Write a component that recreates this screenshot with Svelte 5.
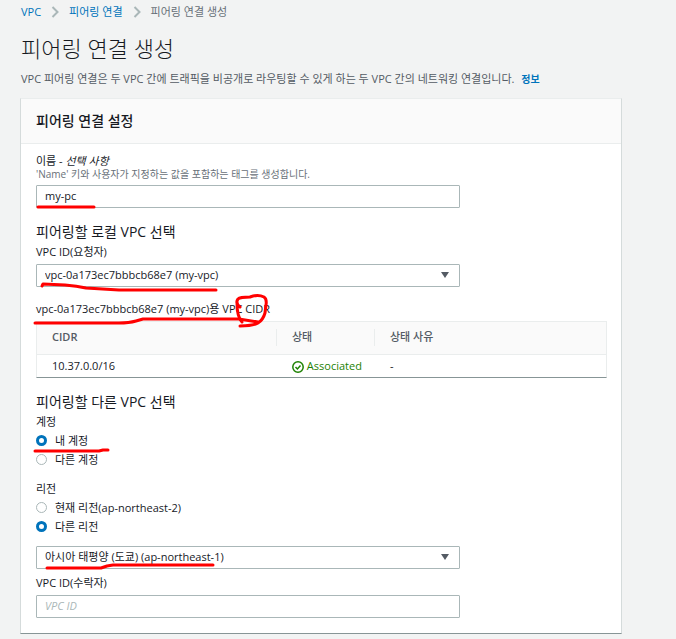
<script>
    let name = $state("my-pc");
    let requester = $state("vpc-0a173ec7bbbcb68e7 (my-vpc)");
    let account = $state("mine");
    let region = $state("other");
    let targetRegion = $state("ap-northeast-1");
    let accepter = $state("");

    const cidrs = [{ cidr: "10.37.0.0/16", status: "Associated", reason: "-" }];
</script>

{#snippet chevron()}
    <svg class="chevron" viewBox="0 0 8 12" aria-hidden="true">
        <path d="M1.5 1 L6.5 6 L1.5 11" />
    </svg>
{/snippet}

<div class="page">
    <nav class="breadcrumb">
        <a href="#vpc">VPC</a>
        {@render chevron()}
        <a href="#peering">피어링 연결</a>
        {@render chevron()}
        <span>피어링 연결 생성</span>
    </nav>

    <h1>피어링 연결 생성</h1>
    <p class="description">
        VPC 피어링 연결은 두 VPC 간에 트래픽을 비공개로 라우팅할 수 있게 하는 두 VPC 간의 네트워킹 연결입니다.
        <a class="info" href="#info">정보</a>
    </p>

    <section class="panel">
        <header>
            <h2>피어링 연결 설정</h2>
        </header>

        <div class="body">
            <div class="field">
                <label for="name">이름 - <em>선택 사항</em></label>
                <div class="hint">'Name' 키와 사용자가 지정하는 값을 포함하는 태그를 생성합니다.</div>
                <input id="name" class="control" type="text" bind:value={name} />
            </div>

            <div class="group">
                <h3>피어링할 로컬 VPC 선택</h3>
                <div class="field">
                    <label for="requester">VPC ID(요청자)</label>
                    <div class="select">
                        <select id="requester" class="control" bind:value={requester}>
                            <option>vpc-0a173ec7bbbcb68e7 (my-vpc)</option>
                        </select>
                        <span class="caret"></span>
                    </div>
                </div>
            </div>

            <table>
                <caption>{requester}용 VPC CIDR</caption>
                <thead>
                    <tr>
                        <th class="col-cidr"><span>CIDR</span></th>
                        <th class="col-status"><span>상태</span></th>
                        <th><span>상태 사유</span></th>
                    </tr>
                </thead>
                <tbody>
                    {#each cidrs as row}
                        <tr>
                            <td>{row.cidr}</td>
                            <td class="status">
                                <svg viewBox="0 0 12 12" aria-hidden="true">
                                    <circle cx="6" cy="6" r="5.2" />
                                    <path d="M3.5 6 L5.4 8 L8.5 4.5" />
                                </svg>
                                {row.status}
                            </td>
                            <td>{row.reason}</td>
                        </tr>
                    {/each}
                </tbody>
            </table>

            <div class="group">
                <h3>피어링할 다른 VPC 선택</h3>
                <fieldset>
                    <legend>계정</legend>
                    <label class="radio">
                        <input type="radio" value="mine" bind:group={account} />내 계정
                    </label>
                    <label class="radio">
                        <input type="radio" value="another" bind:group={account} />다른 계정
                    </label>
                </fieldset>
            </div>

            <fieldset class="region">
                <legend>리전</legend>
                <label class="radio">
                    <input type="radio" value="current" bind:group={region} />현재 리전(ap-northeast-2)
                </label>
                <label class="radio">
                    <input type="radio" value="other" bind:group={region} />다른 리전
                </label>
            </fieldset>

            <div class="select target">
                <select class="control" aria-label="리전" bind:value={targetRegion}>
                    <option value="ap-northeast-1">아시아 태평양 (도쿄) (ap-northeast-1)</option>
                </select>
                <span class="caret"></span>
            </div>

            <div class="field accepter">
                <label for="accepter">VPC ID(수락자)</label>
                <input id="accepter" class="control" type="text" placeholder="VPC ID" bind:value={accepter} />
            </div>
        </div>

        <!-- red pen marks over the form -->
        <svg class="marks" width="600" height="535" aria-hidden="true">
            <path d="M17 108 H73" />
            <path d="M21 187 L22 185 L44 186 Q56 187 65 189 L98 191 H195" />
            <path d="M14 224 H98 Q108 224 115 222 L122 220 H218 L237 223" />
            <path d="M219 208 Q214 204 217 200 Q219 198 229 198 Q237 195 243 198 Q246 200 245 206 L244 214 Q242 221 237 224 Q232 227 219 227 M216 204 Q216 218 221 223" />
            <path d="M14 352 H78 L82 351 H87" />
            <path d="M26 469 H80 L86 467 L92 466 H192" />
        </svg>
    </section>
</div>

<style>
    :global(body) {
        margin: 0;
        background: #f2f3f3;
    }

    .page {
        padding: 4px 54px 6px 20px;
        font-family: "Open Sans", "Noto Sans CJK KR", sans-serif;
        font-size: 11px;
        line-height: 14px;
        color: #16191f;
    }

    a {
        color: #0073bb;
        text-decoration: none;
    }

    .breadcrumb {
        display: flex;
        align-items: center;
        gap: 10px;
        height: 16px;
        padding-left: 1px;
        color: #687078;
    }

    .chevron {
        width: 8px;
        height: 12px;
        fill: none;
        stroke: #aab7b8;
        stroke-width: 2;
    }

    h1,
    h2,
    h3,
    p {
        margin: 0;
        font-weight: 400;
    }

    h1 {
        margin-top: 14px;
        padding-left: 1px;
        font-size: 22px;
        line-height: 28px;
        font-weight: 300;
    }

    .description {
        margin: 10px 0 12px;
        padding-left: 1px;
        color: #545b64;
        white-space: nowrap;
    }

    .info {
        margin-left: 4px;
        font-size: 10px;
        font-weight: 700;
    }

    .panel {
        position: relative;
        background: #fff;
        border: 1px solid #d5dbdb;
        border-top-color: #eaeded;
        border-bottom-color: #879596;
    }

    header {
        padding: 10px 15px;
        background: #fafafa;
        border-bottom: 1px solid #eaeded;
    }

    h2 {
        font-size: 14px;
        line-height: 24px;
        font-weight: 500;
    }

    .body {
        padding: 10px 14px 15px 15px;
    }

    .field label,
    legend {
        display: block;
        padding: 0;
    }

    .hint {
        font-size: 10px;
        line-height: 12px;
        color: #687078;
    }

    .control {
        display: block;
        box-sizing: border-box;
        width: 100%;
        max-width: 424px;
        height: 23px;
        margin: 5px 0 0;
        padding: 0 8px 2px;
        border: 1px solid #aab7b8;
        border-radius: 1px;
        background: #fff;
        color: #16191f;
        font: inherit;
        appearance: none;
    }

    .control::placeholder {
        color: #aab7b8;
        font-style: italic;
    }

    .select {
        position: relative;
        max-width: 424px;
    }

    .caret {
        position: absolute;
        right: 11px;
        bottom: 9px;
        border: 4px solid transparent;
        border-top: 6px solid #545b64;
        border-bottom: 0;
        pointer-events: none;
    }

    .group {
        margin-top: 14px;
    }

    h3 {
        margin-bottom: 3px;
        font-size: 14px;
        line-height: 20px;
    }

    table {
        width: 100%;
        margin-top: 15px;
        border: 1px solid #eaeded;
        border-bottom-color: #879596;
        border-spacing: 0;
        table-layout: fixed;
    }

    caption {
        padding-bottom: 5px;
        text-align: left;
        white-space: nowrap;
    }

    th,
    td {
        padding: 0 15px;
        text-align: left;
    }

    th {
        padding: 7px 0 8px;
        background: #fafafa;
        border-bottom: 1px solid #eaeded;
        color: #545b64;
        font-weight: 500;
    }

    th span {
        display: block;
        padding: 1px 15px 2px;
        border-right: 1px solid #eaeded;
    }

    th:last-child span {
        border-right: 0;
    }

    .col-cidr {
        width: 240px;
        font-weight: 600;
    }

    .col-status {
        width: 98px;
    }

    td {
        height: 22px;
    }

    .status {
        padding-right: 0;
        color: #1d8102;
        white-space: nowrap;
    }

    .status svg {
        width: 12px;
        height: 12px;
        vertical-align: -3px;
        fill: none;
        stroke: #1d8102;
        stroke-width: 1.5;
    }

    fieldset {
        margin: 0;
        padding: 0;
        border: 0;
    }

    legend {
        margin-bottom: 2px;
    }

    .radio {
        display: flex;
        align-items: center;
        gap: 8px;
        height: 19px;
    }

    .radio input {
        box-sizing: border-box;
        width: 11px;
        height: 11px;
        margin: 0;
        border: 1px solid #aab7b8;
        border-radius: 50%;
        background: #fff;
        appearance: none;
    }

    .radio input:checked {
        border: 3px solid #0073bb;
    }

    .region {
        margin-top: 13px;
    }

    .target {
        padding-top: 5px;
    }

    .accepter {
        margin-top: 7px;
    }

    .marks {
        position: absolute;
        top: 0;
        left: 0;
        fill: none;
        stroke: #f00;
        stroke-width: 3;
        stroke-linecap: round;
        stroke-linejoin: round;
        pointer-events: none;
    }
</style>
